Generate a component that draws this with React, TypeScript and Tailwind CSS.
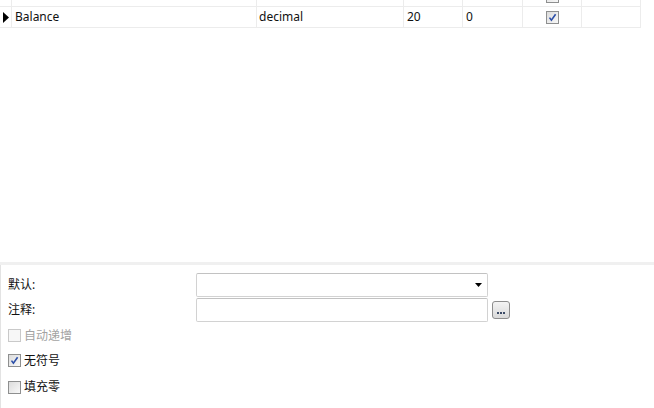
import React from "react";

const cols = ["w-[12px]", "w-[245px]", "w-[147px]", "w-[59px]", "w-[60px]", "w-[59px]", "w-[59px]"];

function Check({ checked, disabled }: { checked?: boolean; disabled?: boolean }) {
  return (
    <span
      className={
        "flex h-[13px] w-[13px] shrink-0 items-center justify-center border " +
        (disabled
          ? "border-[#c9c9c9] bg-[#f7f7f7]"
          : "border-[#8e8f8f] bg-gradient-to-br from-[#dcdcdc] to-[#f8f8f8]")
      }
    >
      {checked && (
        <svg width="9" height="9" viewBox="0 0 9 9">
          <path d="M1.5 4.6 L3.4 7.2 L7.6 1.2" fill="none" stroke="#2c4fa8" strokeWidth="1.6" />
        </svg>
      )}
    </span>
  );
}

function Row({ cells, current, checked }: { cells: string[]; current?: boolean; checked?: boolean }) {
  return (
    <div className="flex h-[21px] w-[641px] border-b border-[#ececec]">
      {cols.map((w, i) => (
        <div key={i} className={`${w} flex h-full shrink-0 items-center border-r border-[#ececec] pl-[2px]`}>
          {i === 0 && current && (
            <svg width="7" height="11" viewBox="0 0 7 11" className="ml-[1px]">
              <path d="M0 0 L6 5.5 L0 11 Z" fill="#000" />
            </svg>
          )}
          {i === 1 && <span className="pl-[1px]">{cells[0]}</span>}
          {i === 2 && <span>{cells[1]}</span>}
          {i === 3 && <span className="pl-[1px]">{cells[2]}</span>}
          {i === 4 && <span className="pl-[1px]">{cells[3]}</span>}
          {i === 5 && (
            <span className="flex w-full justify-center pr-[1px]">
              <Check checked={checked} />
            </span>
          )}
        </div>
      ))}
    </div>
  );
}

export default function App() {
  return (
    <div className="flex h-[408px] w-[654px] flex-col overflow-hidden bg-white font-['Noto_Sans','Noto_Sans_CJK_SC',sans-serif] text-[12px] text-[#111]">
      <div className="h-[262px] shrink-0 overflow-hidden">
        <div className="-mt-[14px]">
          <Row cells={["", "", "", ""]} />
          <Row cells={["Balance", "decimal", "20", "0"]} current checked />
        </div>
      </div>
      <div className="h-[3px] shrink-0 bg-[#f0f0f0]" />
      <div className="flex flex-1 flex-col border-l border-[#e3e3e3] pl-[7px] pt-[8px]">
        <div className="flex h-[24px] items-center">
          <span className="w-[188px]">默认:</span>
          <div className="flex h-[24px] w-[292px] items-center justify-end rounded-[2px] border border-[#d2d2d2] border-t-[#c2c2c2] pr-[5px]">
            <svg width="7" height="4" viewBox="0 0 7 4">
              <path d="M0 0 H7 L3.5 4 Z" fill="#000" />
            </svg>
          </div>
        </div>
        <div className="mt-[1px] flex h-[24px] items-center">
          <span className="w-[188px]">注释:</span>
          <div className="h-[24px] w-[292px] rounded-[2px] border border-[#d2d2d2] border-t-[#c2c2c2]" />
          <button className="ml-[4px] flex h-[18px] w-[18px] items-end justify-center rounded-[3px] border border-[#8d8d8d] bg-gradient-to-b from-[#f4f4f4] to-[#d9d9d9] pb-[4px]">
            <span className="flex gap-[1px]">
              <span className="h-[2px] w-[2px] bg-[#3b4a66]" />
              <span className="h-[2px] w-[2px] bg-[#3b4a66]" />
              <span className="h-[2px] w-[2px] bg-[#3b4a66]" />
            </span>
          </button>
        </div>
        <div className="mt-[1px] flex flex-col">
          <label className="flex h-[25px] items-center gap-[3px] text-[#a3a3a3]">
            <Check disabled />
            <span>自动递增</span>
          </label>
          <label className="flex h-[25px] items-center gap-[3px]">
            <Check checked />
            <span>无符号</span>
          </label>
          <label className="mt-[1px] flex h-[26px] items-center gap-[3px]">
            <Check />
            <span>填充零</span>
          </label>
        </div>
      </div>
    </div>
  );
}
